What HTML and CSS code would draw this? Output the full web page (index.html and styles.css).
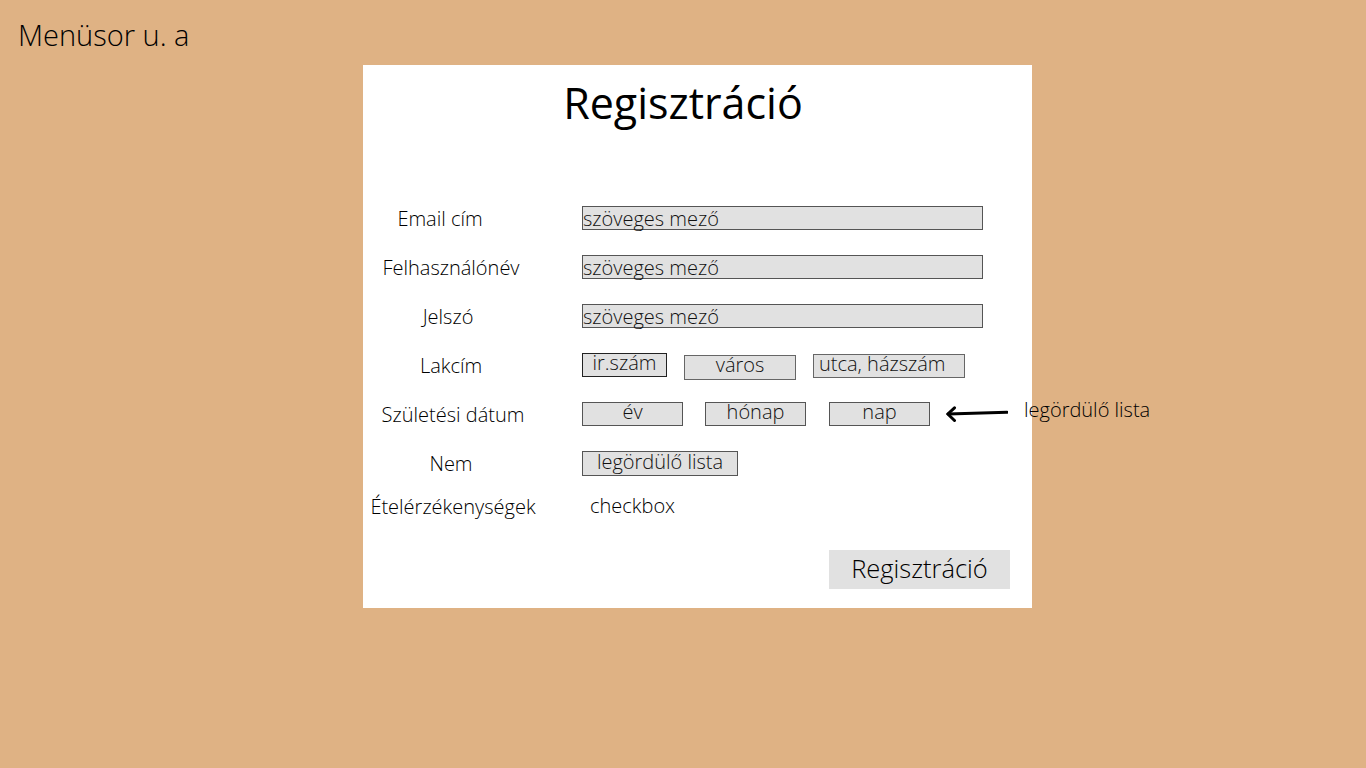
FILE: index.html
```html
<!DOCTYPE html>
<html lang="hu">
<head>
<meta charset="utf-8">
<title>Regisztráció</title>
<link rel="stylesheet" href="styles.css">
</head>
<body>
<header class="menubar">Menüsor u. a</header>
<main class="card">
  <h1 class="title">Regisztráció</h1>
  <div class="form">
    <div class="row">
      <span class="label shift-email">Email cím</span>
      <div class="fields"><span class="box text">szöveges mező</span></div>
    </div>
    <div class="row">
      <span class="label">Felhasználónév</span>
      <div class="fields"><span class="box text">szöveges mező</span></div>
    </div>
    <div class="row">
      <span class="label shift-pw">Jelszó</span>
      <div class="fields"><span class="box text">szöveges mező</span></div>
    </div>
    <div class="row">
      <span class="label">Lakcím</span>
      <div class="fields addr">
        <span class="box w-zip">ir.szám</span>
        <span class="box w-city">város</span>
        <span class="box w-street">utca, házszám</span>
      </div>
    </div>
    <div class="row">
      <span class="label shift-right">Születési dátum</span>
      <div class="fields date">
        <span class="box w-date">év</span>
        <span class="box w-date">hónap</span>
        <span class="box w-date w-day">nap</span>
        <span class="note">
          <svg class="arrow" width="62" height="18" viewBox="0 0 62 18"><path d="M61 7.3 L2 9" fill="none" stroke="#000" stroke-width="3" stroke-linecap="round"/><path d="M8.5 2.8 L1.8 9 L8.5 15.5" fill="none" stroke="#000" stroke-width="3" stroke-linecap="round" stroke-linejoin="round"/></svg>
          <span class="note-text">legördülő lista</span>
        </span>
      </div>
    </div>
    <div class="row">
      <span class="label">Nem</span>
      <div class="fields"><span class="box w-sex">legördülő lista</span></div>
    </div>
    <div class="row row-last">
      <span class="label shift-right">Ételérzékenységek</span>
      <div class="fields"><span class="plain">checkbox</span></div>
    </div>
  </div>
  <div class="actions"><button class="submit" type="button">Regisztráció</button></div>
</main>
</body>
</html>
```

FILE: styles.css
```css
* { box-sizing: border-box; }
html, body { margin: 0; }
body {
  background: #dfb284;
  font-family: "Open Sans", "Liberation Sans", sans-serif;
  font-weight: 300;
  color: #000;
  padding: 16px 0 0 18px;
  height: 768px;
  overflow: hidden;
}
.menubar {
  font-size: 29px;
  line-height: 38px;
  height: 38px;
}
.card {
  margin: 11px 0 0 345px;
  width: 669px;
  height: 543px;
  background: #fff;
  padding: 8px 22px 0 0;
  display: flex;
  flex-direction: column;
}
.title {
  margin: 0;
  font-size: 43px;
  font-weight: 400;
  line-height: 60px;
  text-align: center;
  padding-right: 7px;
  color: #000;
}
.form {
  margin-top: 60px;
  display: flex;
  flex-direction: column;
}
.row {
  display: grid;
  grid-template-columns: 176px 1fr;
  column-gap: 43px;
  align-items: center;
  height: 49px;
}
.row-last { height: 37px; }
.label {
  font-size: 20px;
  text-align: center;
  white-space: nowrap;
  line-height: 27px;
  padding-top: 2px;
}
.shift-email { padding-right: 22px; }
.shift-pw { padding-right: 6px; }
.shift-right { padding-left: 4px; }
.fields {
  display: flex;
  align-items: center;
}
.box {
  display: inline-block;
  height: 24px;
  background: #e1e1e1;
  border: 1px solid #4a4a4a;
  font-size: 20px;
  line-height: 17px;
  text-align: center;
  color: #111;
  white-space: nowrap;
}
.box.text {
  width: 401px;
  text-align: left;
  line-height: 24px;
  border-color: #555;
}
.addr { gap: 17px; }
.date { gap: 22px; }
.w-zip { width: 85px; border-color: #222; }
.w-city {
  width: 112px;
  height: 25px;
  line-height: 18px;
  margin-top: 6px;
  border-color: #666;
}
.w-street {
  width: 152px;
  margin-top: 2px;
  border-color: #666;
  text-align: left;
  padding-left: 5px;
}
.w-date { width: 101px; border-color: #555; }
.w-day { margin-left: 1px; }
.w-sex {
  width: 156px;
  height: 25px;
  line-height: 20px;
  margin-top: 2px;
  border-color: #555;
}
.plain {
  font-size: 20px;
  padding-left: 8px;
  line-height: 27px;
}
.note {
  display: flex;
  align-items: center;
  gap: 16px;
  margin-left: -6px;
  white-space: nowrap;
}
.arrow { display: block; }
.note-text {
  font-size: 20px;
  line-height: 27px;
  margin-bottom: 9px;
}
.actions {
  display: flex;
  justify-content: flex-end;
  margin-top: 26px;
}
.submit {
  width: 181px;
  height: 39px;
  border: none;
  background: #e1e1e1;
  font-family: inherit;
  font-weight: 300;
  font-size: 25.5px;
  color: #000;
  padding: 0 0 9px 0;
  line-height: 36px;
}
```
